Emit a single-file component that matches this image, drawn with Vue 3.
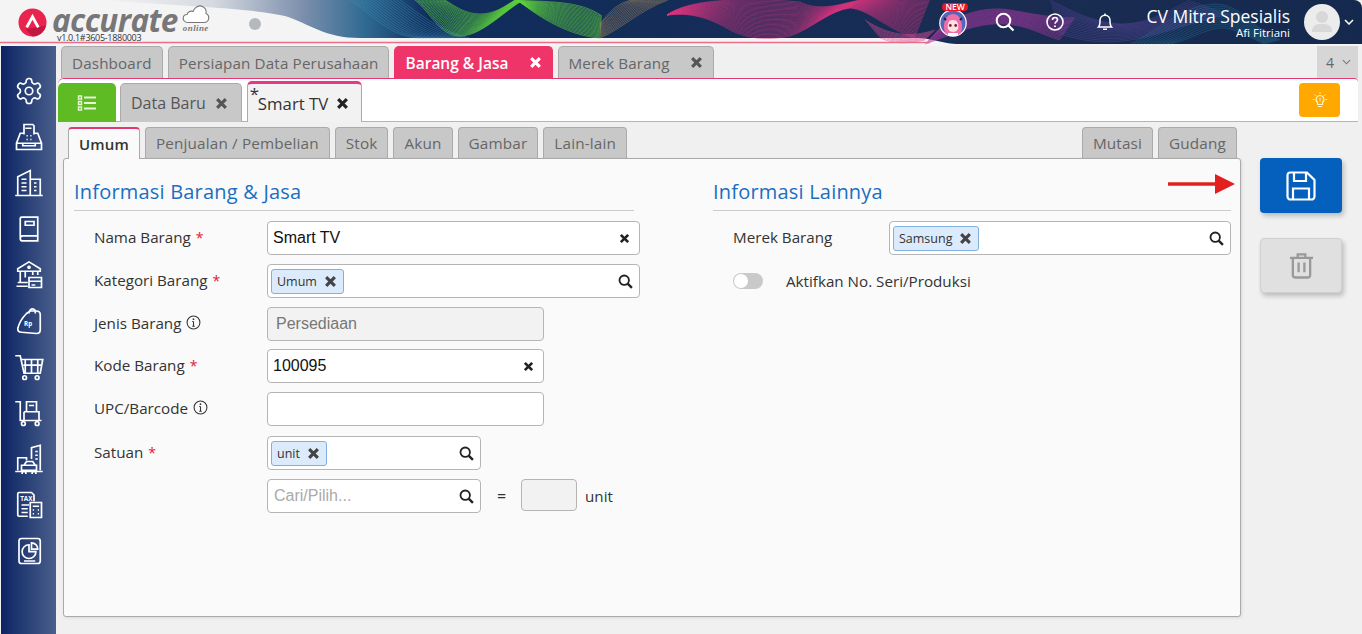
<template>
  <div class="app">
    <svg class="sprite" width="0" height="0">
      <symbol id="i-x" viewBox="0 0 12 12">
        <path d="M2 2l8 8M10 2l-8 8" fill="none" stroke="currentColor" stroke-width="2.9" />
      </symbol>
      <symbol id="i-search" viewBox="0 0 14 14">
        <circle cx="5.8" cy="5.8" r="4.4" fill="none" stroke="currentColor" stroke-width="1.7" />
        <path d="M9 9l4 4" fill="none" stroke="currentColor" stroke-width="2.2" />
      </symbol>
      <symbol id="i-info" viewBox="0 0 14 14">
        <circle cx="7" cy="7" r="6" fill="none" stroke="currentColor" stroke-width="1" />
        <path d="M7 6v4.5M5.8 10.5h2.4M5.8 6H7" fill="none" stroke="currentColor" stroke-width="1" />
        <circle cx="7" cy="3.9" r=".8" fill="currentColor" />
      </symbol>
    </svg>

    <header class="topbar">
      <svg class="banner" viewBox="0 0 1362 46" preserveAspectRatio="none">
        <defs>
          <linearGradient id="base" x1="0" x2="1" y1="0" y2="0">
            <stop offset="0" stop-color="#f4f4f4" />
            <stop offset=".09" stop-color="#d5d9e0" />
            <stop offset=".16" stop-color="#7d90ad" />
            <stop offset=".21" stop-color="#2f6a92" />
            <stop offset=".26" stop-color="#0f2d5c" />
            <stop offset=".7" stop-color="#1a2c52" />
            <stop offset="1" stop-color="#15294f" />
          </linearGradient>
        </defs>
        <path d="M100 0C180 6 250 8 285 16C310 24 325 38 360 38L915 38C935 38 940 44 960 44L1362 44L1362 0Z" fill="url(#base)" />
        <g v-for="ribbon in ribbons" :key="ribbon.name" fill="none" :stroke="ribbon.color" :stroke-opacity="ribbon.opacity" stroke-width=".7">
          <path v-for="(d, i) in ribbon.strands" :key="i" :d="d" />
        </g>
        <path d="M0 42.5H930" stroke="#ee6d86" stroke-width="1.6" />
      </svg>

      <div class="brand">
        <svg class="brand-mark" viewBox="0 0 30 30">
          <circle cx="15" cy="15" r="14.5" fill="#e8244f" />
          <path d="M15 29.5A14.5 14.5 0 0 0 29 18L8 22Z" fill="#c2173f" />
          <path d="M9 20l6-11 6 11" fill="none" stroke="#fff" stroke-width="3" />
        </svg>
        <div class="brand-text">
          <div class="brand-line">
            <span class="brand-name">accurate</span>
            <div class="brand-cloud">
              <svg viewBox="0 0 28 20" width="28" height="20">
                <path d="M6 18.5C2.5 18.5 1 16 1.2 14C1.4 12 3 10.5 5 10.5C6 7.5 9 6.5 11 7.5C12.5 3 17 .8 20.5 2.5C23.5 4 24.5 7 24 9.5C26 10.5 27 12.5 26.7 14.5C26.3 17 24.5 18.5 22 18.5Z" fill="#fff" stroke="#777" stroke-width="1.1" />
              </svg>
              <span class="brand-online">online</span>
            </div>
          </div>
          <span class="brand-version">v1.0.1#3605-1880003</span>
        </div>
        <span class="brand-dot"></span>
      </div>

      <div class="top-actions">
        <div class="mascot">
          <svg viewBox="0 0 28 28" width="28" height="28">
            <circle cx="14" cy="14" r="13.2" fill="#5566b8" stroke="#fff" stroke-width="1.2" />
            <path d="M6 24C3 14 7 5 14 5C21 5 25 14 22 24L19 26H9Z" fill="#f06ea8" />
            <path d="M9 20C8 14 10 11 14 11C18 11 20 14 19 20C17 24 11 24 9 20Z" fill="#fde3dc" />
            <circle cx="11.3" cy="16.5" r="1.4" fill="#7b1f4f" />
            <circle cx="16.7" cy="16.5" r="1.4" fill="#7b1f4f" />
            <path d="M9 24H19V27H9Z" fill="#fff" />
            <path d="M5 9l2 2M23 9l-2 2" stroke="#1b1f4a" stroke-width="2" />
          </svg>
          <span class="mascot-new">NEW</span>
        </div>
        <svg class="top-icon" viewBox="0 0 20 20">
          <circle cx="8.5" cy="8.5" r="6.8" fill="none" stroke="#fff" stroke-width="2" />
          <path d="M13.5 13.5L18.5 18.5" stroke="#fff" stroke-width="2.2" />
        </svg>
        <svg class="top-icon" viewBox="0 0 20 20">
          <circle cx="10" cy="10" r="8" fill="none" stroke="#fff" stroke-width="1.6" />
          <path d="M7.5 8C7.5 6.5 8.7 5.5 10 5.5C11.5 5.5 12.5 6.5 12.5 7.8C12.5 9.5 10 9.8 10 11.8" fill="none" stroke="#fff" stroke-width="1.6" />
          <circle cx="10" cy="14.3" r="1" fill="#fff" />
        </svg>
        <svg class="top-icon bell" viewBox="0 0 20 20">
          <path d="M3.5 15C5 13.5 5 12 5 8.5C5 5.5 7 3.2 10 3.2C13 3.2 15 5.5 15 8.5C15 12 15 13.5 16.5 15Z" fill="none" stroke="#fff" stroke-width="1.5" />
          <path d="M8 17.3H12M10 1.5V3" stroke="#fff" stroke-width="1.6" />
        </svg>
        <div class="company">
          <span class="company-name">CV Mitra Spesialis</span>
          <span class="company-user">Afi Fitriani</span>
        </div>
        <div class="avatar">
          <svg viewBox="0 0 36 36" width="36" height="36">
            <circle cx="18" cy="13" r="6" fill="#d8d8d8" />
            <path d="M8 28C8 21 12 20 18 20C24 20 28 21 28 28Z" fill="#d8d8d8" />
          </svg>
        </div>
        <svg class="avatar-caret" viewBox="0 0 10 6" width="10" height="6">
          <path d="M1 1l4 4 4-4" fill="none" stroke="#fff" stroke-width="1.5" />
        </svg>
      </div>
    </header>

    <div class="layout">
      <nav class="sidebar">
        <svg v-for="icon in sideIcons" :key="icon.name" class="side-icon" viewBox="0 0 24 24">
          <path :d="icon.d" />
          <text v-if="icon.text" :x="icon.tx" :y="icon.ty" class="side-text">{{ icon.text }}</text>
        </svg>
      </nav>

      <main class="main">
        <div class="main-tabs">
          <div
            v-for="tab in mainTabs"
            :key="tab.label"
            class="main-tab"
            :class="{ active: tab.active }"
          >
            <span>{{ tab.label }}</span>
            <svg v-if="tab.close" class="tab-x"><use href="#i-x" /></svg>
          </div>
          <div class="tab-count">
            4
            <svg viewBox="0 0 10 6" width="9" height="6">
              <path d="M1 1l4 4 4-4" fill="none" stroke="#777" stroke-width="1.2" />
            </svg>
          </div>
        </div>

        <div class="doc-bar">
          <button class="list-btn">
            <svg viewBox="0 0 20 18" width="20" height="18">
              <path d="M1.5 2h3v3h-3zM1.5 7.5h3v3h-3zM1.5 13h3v3h-3z" fill="none" stroke="#e6f6d6" stroke-width="1.4" />
              <path d="M7 3.5h12M7 9h12M7 14.5h12" stroke="#e6f6d6" stroke-width="2" />
            </svg>
          </button>
          <div class="doc-tab">
            <span>Data Baru</span>
            <svg class="tab-x"><use href="#i-x" /></svg>
          </div>
          <div class="doc-tab active">
            <sup class="star">*</sup>
            <span>Smart TV</span>
            <svg class="tab-x"><use href="#i-x" /></svg>
          </div>
          <button class="tip-btn">
            <svg viewBox="0 0 18 18" width="18" height="18">
              <path d="M9 4.5A4 4 0 0 0 6.5 11.5V13.5H11.5V11.5A4 4 0 0 0 9 4.5Z" fill="none" stroke="#fff3c8" stroke-width="1.2" />
              <path d="M7 15.5H11M9 7V10.5M9 1V2.8M3.5 3.5L4.8 4.8M14.5 3.5L13.2 4.8M1.8 8.5H3.5M14.5 8.5H16.2" stroke="#fff3c8" stroke-width="1" />
            </svg>
          </button>
        </div>

        <div class="workspace">
          <div class="form-col">
            <div class="form-tabs">
              <div
                v-for="tab in formTabs"
                :key="tab"
                class="form-tab"
                :class="{ active: tab === 'Umum' }"
              >{{ tab }}</div>
              <div class="form-tabs-end">
                <div v-for="tab in extraTabs" :key="tab" class="form-tab">{{ tab }}</div>
              </div>
            </div>

            <section class="panel">
              <svg class="pointer" viewBox="0 0 68 22" width="68" height="22">
                <path d="M0 11H50" stroke="#e3201f" stroke-width="3.5" />
                <path d="M47 1L67 11L47 21Z" fill="#e3201f" />
              </svg>

              <div class="column">
                <h2 class="section-title">Informasi Barang &amp; Jasa</h2>
                <div class="rows">
                  <div class="row">
                    <label>Nama Barang <em>*</em></label>
                    <div class="field wide">
                      <span class="value">Smart TV</span>
                      <svg class="field-x"><use href="#i-x" /></svg>
                    </div>
                  </div>
                  <div class="row">
                    <label>Kategori Barang <em>*</em></label>
                    <div class="field wide chip-field">
                      <span class="chip">Umum <svg class="chip-x"><use href="#i-x" /></svg></span>
                      <svg class="field-search"><use href="#i-search" /></svg>
                    </div>
                  </div>
                  <div class="row tight">
                    <label>Jenis Barang <svg class="info"><use href="#i-info" /></svg></label>
                    <div class="field mid disabled"><span class="value muted">Persediaan</span></div>
                  </div>
                  <div class="row">
                    <label>Kode Barang <em>*</em></label>
                    <div class="field mid">
                      <span class="value">100095</span>
                      <svg class="field-x"><use href="#i-x" /></svg>
                    </div>
                  </div>
                  <div class="row loose">
                    <label>UPC/Barcode <svg class="info"><use href="#i-info" /></svg></label>
                    <div class="field mid"></div>
                  </div>
                  <div class="row">
                    <label>Satuan <em>*</em></label>
                    <div class="field short chip-field">
                      <span class="chip">unit <svg class="chip-x"><use href="#i-x" /></svg></span>
                      <svg class="field-search"><use href="#i-search" /></svg>
                    </div>
                  </div>
                  <div class="row">
                    <label></label>
                    <div class="field short">
                      <span class="value placeholder">Cari/Pilih...</span>
                      <svg class="field-search"><use href="#i-search" /></svg>
                    </div>
                    <span class="equals">=</span>
                    <div class="ratio-box"></div>
                    <span class="ratio-unit">unit</span>
                  </div>
                </div>
              </div>

              <div class="column">
                <h2 class="section-title">Informasi Lainnya</h2>
                <div class="rows">
                  <div class="row">
                    <label class="label-right">Merek Barang</label>
                    <div class="field grow chip-field">
                      <span class="chip">Samsung <svg class="chip-x"><use href="#i-x" /></svg></span>
                      <svg class="field-search"><use href="#i-search" /></svg>
                    </div>
                  </div>
                  <div class="switch-row">
                    <span class="switch"><i></i></span>
                    <span class="switch-label">Aktifkan No. Seri/Produksi</span>
                  </div>
                </div>
              </div>
            </section>
          </div>

          <div class="actions">
            <button class="action save">
              <svg viewBox="0 0 32 32" width="32" height="32">
                <path d="M5 2.5H22L29.5 10V26.5A3 3 0 0 1 26.5 29.5H5.5A3 3 0 0 1 2.5 26.5V5A2.5 2.5 0 0 1 5 2.5Z" fill="none" stroke="#fff" stroke-width="2.2" />
                <path d="M9 3V11H21V3M8 29V18.5H24V29" fill="none" stroke="#fff" stroke-width="2.2" />
              </svg>
            </button>
            <button class="action remove">
              <svg viewBox="0 0 26 28" width="25" height="27">
                <path d="M1 6H25M9 5.5V2.5H17V5.5M4 6V24A2.5 2.5 0 0 0 6.5 26.5H19.5A2.5 2.5 0 0 0 22 24V6M10 11V21M16 11V21" fill="none" stroke="#999" stroke-width="2.4" />
              </svg>
            </button>
          </div>
        </div>
      </main>
    </div>
  </div>
</template>

<script setup>
const mainTabs = [
  { label: 'Dashboard' },
  { label: 'Persiapan Data Perusahaan' },
  { label: 'Barang & Jasa', close: true, active: true },
  { label: 'Merek Barang', close: true },
]

const formTabs = ['Umum', 'Penjualan / Pembelian', 'Stok', 'Akun', 'Gambar', 'Lain-lain']
const extraTabs = ['Mutasi', 'Gudang']

// banner waves: each ribbon is a bundle of thin lines between two edge curves
const strands = (a, b, count) => {
  const lines = []
  for (let s = 0; s <= count; s++) {
    const t = s / count
    const p = a.map((v, i) => (v + (b[i] - v) * t).toFixed(1))
    let d = `M${p[0]} ${p[1]}`
    for (let i = 2; i < p.length; i += 6) {
      d += `C${p.slice(i, i + 6).join(' ')}`
    }
    lines.push(d)
  }
  return lines
}

const ribbons = [
  {
    name: 'teal',
    color: '#3f9fc0',
    opacity: 0.55,
    strands: strands(
      [350, 0, 370, 12, 390, 38, 420, 38],
      [400, 0, 420, 14, 440, 32, 470, 38],
      14,
    ),
  },
  {
    name: 'green',
    color: '#5fd63c',
    opacity: 0.8,
    strands: strands(
      [415, 0, 430, 12, 440, 36, 460, 36, 480, 36, 500, 15, 520, 2, 540, 18, 570, 36, 600, 38],
      [445, 0, 455, 6, 465, 14, 480, 14, 495, 14, 505, 6, 515, 0, 545, 2, 580, 0, 602, 16],
      22,
    ),
  },
  {
    name: 'gold',
    color: '#c29a5a',
    opacity: 0.6,
    strands: strands(
      [600, 38, 620, 30, 640, 10, 668, 0],
      [600, 24, 610, 10, 620, 2, 632, 0],
      14,
    ),
  },
  {
    name: 'pink',
    color: '#d8327f',
    opacity: 0.7,
    strands: strands(
      [667, 15, 690, 12, 710, 18, 730, 30, 750, 40, 770, 40, 790, 36, 810, 30, 830, 10, 850, 8, 870, 10, 885, 28, 915, 38],
      [667, 15, 685, 2, 720, 0, 740, 0, 760, 0, 780, 0, 800, 2, 820, 12, 840, 4, 860, 0, 880, 0, 900, 0, 930, 0],
      30,
    ),
  },
  {
    name: 'pink-low',
    color: '#e04a94',
    opacity: 0.7,
    strands: strands(
      [880, 38, 895, 44, 905, 44, 925, 40],
      [865, 20, 890, 36, 910, 38, 935, 30],
      8,
    ),
  },
  {
    name: 'purple',
    color: '#b33aa8',
    opacity: 0.7,
    strands: strands(
      [925, 44, 950, 36, 975, 22, 1005, 24, 1030, 26, 1040, 34, 1060, 40],
      [940, 28, 960, 14, 985, 6, 1010, 10, 1035, 14, 1050, 18, 1075, 18],
      18,
    ),
  },
  {
    name: 'indigo',
    color: '#6a4fb0',
    opacity: 0.5,
    strands: strands(
      [1050, 0, 1070, 10, 1090, 22, 1120, 24, 1150, 24, 1170, 10, 1190, 0],
      [1060, 34, 1090, 44, 1120, 44, 1150, 36, 1180, 28, 1200, 20, 1230, 14],
      16,
    ),
  },
  {
    name: 'sea',
    color: '#2a8fae',
    opacity: 0.45,
    strands: strands(
      [1130, 44, 1160, 30, 1180, 6, 1215, 4, 1240, 4, 1250, 26, 1280, 40],
      [1170, 44, 1190, 40, 1210, 26, 1225, 28, 1240, 30, 1250, 38, 1265, 44],
      12,
    ),
  },
]

const sideIcons = [
  { name: 'settings', d: 'M12.22 2h-.44a2 2 0 0 0-2 2v.18a2 2 0 0 1-1 1.73l-.43.25a2 2 0 0 1-2 0l-.15-.08a2 2 0 0 0-2.73.73l-.22.38a2 2 0 0 0 .73 2.73l.15.1a2 2 0 0 1 1 1.72v.51a2 2 0 0 1-1 1.74l-.15.09a2 2 0 0 0-.73 2.73l.22.38a2 2 0 0 0 2.73.73l.15-.08a2 2 0 0 1 2 0l.43.25a2 2 0 0 1 1 1.73V20a2 2 0 0 0 2 2h.44a2 2 0 0 0 2-2v-.18a2 2 0 0 1 1-1.73l.43-.25a2 2 0 0 1 2 0l.15.08a2 2 0 0 0 2.73-.73l.22-.39a2 2 0 0 0-.73-2.73l-.15-.08a2 2 0 0 1-1-1.74v-.5a2 2 0 0 1 1-1.74l.15-.09a2 2 0 0 0 .73-2.73l-.22-.38a2 2 0 0 0-2.73-.73l-.15.08a2 2 0 0 1-2 0l-.43-.25a2 2 0 0 1-1-1.73V4a2 2 0 0 0-2-2zM15 12a3 3 0 1 1-6 0a3 3 0 0 1 6 0z' },
  { name: 'fax', d: 'M8 10V2h7l1 1v7M9 5h5M8 9H5l-3 8v5h20v-5l-3-8h-3M2 17h20M7 17v2h10v-2M10 11h1M13 11h1M10 14h1M13 14h1' },
  { name: 'company', d: 'M3 22V7l10-5v20M13 9h8v13M1 22h22M6 9h4M6 12h4M6 15h4M6 18h4M16 12h2M16 15h2M16 18h2' },
  { name: 'book', d: 'M5 19V3.5a1 1 0 0 1 1-1h13v19H7a2 2 0 0 1-2-2a2 2 0 0 1 2-2h12M9 6h7v3H9z' },
  { name: 'bank', d: 'M12 1.5L3 7v2h18V7zM5 9v9M9 9v5M3 18h8M2 21h9M12 5a.8.8 0 1 0 .01 0M12 14h10v8H12zM12 17h10M14 20h3M15 9v3M19 9v3' },
  { name: 'price', d: 'M10 6c-3 3-6 8-7 12c0 2 1 3 3 3l12 1c2 0 3-1 3-3V7c0-2-1-3-3-3h-5zM12 6c0-5 6-5 5 0', text: 'Rp', tx: 8, ty: 16 },
  { name: 'cart', d: 'M1 3h4l3 14h13l2-11H6M7.5 10.5h15M9 6v11M14 6v11M19 6v11M7 20.5a1.5 1.5 0 1 0 3 0a1.5 1.5 0 1 0-3 0M17 20.5a1.5 1.5 0 1 0 3 0a1.5 1.5 0 1 0-3 0' },
  { name: 'cart-box', d: 'M1 3h4v15h17M8 11h12v7M10 3h8v8h-8zM12 6h4M8 11v7M6 20.5a1.5 1.5 0 1 0 3 0a1.5 1.5 0 1 0-3 0M17 20.5a1.5 1.5 0 1 0 3 0a1.5 1.5 0 1 0-3 0' },
  { name: 'fleet', d: 'M1 22h22M3 21V11h7v2M14 12V3l7-2v20M17 6h2M17 9h2M17 12h2M8 17l2-3h5l2 3M6 17h12v4H6zM8 22a1.5 1.5 0 1 0 .01 0M16 22a1.5 1.5 0 1 0 .01 0' },
  { name: 'tax', d: 'M4 2h10l2 2v5M4 2a1 1 0 0 0-1 1v17a1 1 0 0 0 1 1h7M6 12h6M6 15h5M6 18h5M13 10h9v12h-9zM15 13h5M15 16h1M19 16h1M15 19h1M19 19h1', text: 'TAX', tx: 5, ty: 8.5 },
  { name: 'report', d: 'M6 2h13a2 2 0 0 1 2 2v16a2 2 0 0 1-2 2H6a2 2 0 0 1-2-2V4a2 2 0 0 1 2-2zM12 7a5.5 5.5 0 1 0 5.5 5.5H12zM14 5.5a5 5 0 0 1 5 5h-5zM8 20h9' },
]
</script>

<style>
html, body { margin: 0; background: #f0f0f0; }
</style>

<style scoped>
.app {
  width: 1362px;
  height: 634px;
  overflow: hidden;
  display: flex;
  flex-direction: column;
  background: #f0f0f0;
  font-family: "Open Sans", "Noto Sans", sans-serif;
  color: #333;
}

.sprite { position: absolute; }

/* top bar */
.topbar {
  position: relative;
  height: 46px;
  flex: none;
  display: flex;
  justify-content: space-between;
  background: #f4f4f4;
  border-top-right-radius: 8px;
  overflow: hidden;
}
.banner {
  position: absolute;
  inset: 0;
  width: 100%;
  height: 100%;
}
.brand {
  position: relative;
  display: flex;
  align-items: flex-start;
  padding: 7px 0 0 18px;
}
.brand-mark { width: 29px; height: 29px; margin-top: 1px; }
.brand-text { display: flex; flex-direction: column; margin-left: 5px; }
.brand-line { display: flex; height: 26px; }
.brand-name {
  font-style: italic;
  font-weight: 700;
  font-size: 31.5px;
  line-height: 26px;
  letter-spacing: -.6px;
  color: #77777a;
  margin-right: 4px;
}
.brand-cloud {
  display: flex;
  flex-direction: column;
  margin-top: -3px;
  align-items: center;
}
.brand-online {
  font-family: "Liberation Serif", serif;
  font-size: 9px;
  font-weight: bold;
  font-style: italic;
  letter-spacing: .4px;
  line-height: 9px;
  color: #777;
}
.brand-version {
  font-size: 9px;
  line-height: 9px;
  margin-left: 5px;
  color: #333;
  letter-spacing: -.3px;
}
.brand-dot {
  width: 12px;
  height: 12px;
  border-radius: 50%;
  background: #b5b8bd;
  margin: 11px 0 0 39px;
}

.top-actions {
  position: relative;
  display: flex;
  align-items: center;
  padding: 0 8px 2px 0;
}
.mascot { position: relative; width: 28px; height: 28px; margin: 2px 28px 0 0; }
.mascot-new {
  position: absolute;
  top: -6px;
  left: 3px;
  padding: 0 3px;
  background: #e8152a;
  border-radius: 4px;
  color: #fff;
  font-size: 8.5px;
  line-height: 8px;
  font-weight: 600;
}
.top-icon { width: 20px; height: 20px; margin-right: 30px; }
.top-icon.bell { margin-right: 31px; }
.company { display: flex; flex-direction: column; align-items: flex-end; color: #fff; margin-right: 14px; }
.company-name { font-size: 17.5px; line-height: 20px; }
.company-user { font-size: 11.5px; line-height: 13px; }
.avatar {
  width: 36px;
  height: 36px;
  border-radius: 50%;
  background: #ececec;
}
.avatar-caret { margin-left: 4px; }

/* page layout */
.layout { flex: 1; display: flex; min-height: 0; }
.sidebar {
  width: 55px;
  margin-left: 1px;
  padding-top: 22px;
  box-sizing: border-box;
  display: flex;
  flex-direction: column;
  align-items: center;
  background: linear-gradient(90deg, #0b2463, #4a5f8c);
}
.side-icon {
  width: 30px;
  height: 30px;
  padding: 8px 0;
  flex: none;
  fill: none;
  stroke: #fff;
  stroke-width: 1.35;
}
.side-text {
  font-size: 5px;
  font-weight: 700;
  fill: #fff;
  stroke: none;
}

.main { flex: 1; min-width: 0; display: flex; flex-direction: column; padding-right: 4px; }

.main-tabs {
  height: 32px;
  display: flex;
  align-items: flex-end;
  padding-left: 5px;
  gap: 5px;
}
.main-tab {
  height: 32px;
  box-sizing: border-box;
  padding: 0 10px;
  display: flex;
  align-items: center;
  gap: 20px;
  background: #c8c8c8;
  border: 1px solid #aaa;
  border-bottom: none;
  border-radius: 5px 5px 0 0;
  font-size: 15.2px;
  letter-spacing: .15px;
  color: #666;
}
.main-tab.active {
  background: #ee3468;
  border-color: #ee3468;
  color: #fff;
  font-weight: 600;
  font-size: 15.5px;
  letter-spacing: 0;
}
.main-tab:last-of-type { margin-left: 1px; }
.tab-x { width: 13px; height: 13px; color: #555; }
.main-tab.active .tab-x { color: #fff; }
.tab-count {
  margin-left: auto;
  width: 41px;
  height: 32px;
  box-sizing: border-box;
  display: flex;
  align-items: center;
  justify-content: center;
  gap: 8px;
  padding-left: 2px;
  background: #d6d6d6;
  color: #666;
  font-size: 14px;
}

.doc-bar {
  height: 44px;
  box-sizing: border-box;
  flex: none;
  display: flex;
  align-items: flex-end;
  background: #fff;
  border-top: 1px solid #e0386f;
  border-bottom: 1px solid #b5b5b5;
  border-radius: 6px 4px 0 0;
  margin-left: 2px;
}
.list-btn {
  width: 58px;
  height: 39px;
  padding: 0;
  border: none;
  border-radius: 5px 5px 0 0;
  background: #5fbb24;
  display: flex;
  align-items: center;
  justify-content: center;
  margin-bottom: -1px;
}
.doc-tab {
  height: 39px;
  box-sizing: border-box;
  margin: 0 0 -1px 4px;
  padding: 0 13px 0 10px;
  display: flex;
  align-items: center;
  gap: 9px;
  background: #c8c8c8;
  border: 1px solid #aaa;
  border-bottom: none;
  border-radius: 5px 5px 0 0;
  font-size: 16px;
  color: #555;
}
.doc-tab.active {
  position: relative;
  height: 41px;
  margin-left: 5px;
  padding: 1px 12px 0 10px;
  gap: 8px;
  background: #f2f2f2;
  border-top: 3px solid #e53888;
  color: #333;
  font-size: 16.8px;
}
.doc-tab.active .tab-x { color: #222; }
.star {
  position: absolute;
  left: 2px;
  top: 2px;
  font-size: 17px;
  line-height: 15px;
}
.tip-btn {
  margin: 4px 18px 4px auto;
  align-self: flex-start;
  width: 41px;
  height: 34px;
  padding: 0;
  border: none;
  border-radius: 4px;
  background: #ffa800;
  display: flex;
  align-items: center;
  justify-content: center;
}

.workspace { flex: 1; display: flex; min-height: 0; padding-left: 7px; }
.form-col { width: 1178px; flex: none; }
.form-tabs {
  height: 31px;
  margin-top: 5px;
  padding: 0 4px 0 5px;
  display: flex;
  gap: 5px;
}
.form-tabs-end { display: flex; gap: 5px; margin-left: auto; }
.form-tab {
  height: 31px;
  box-sizing: border-box;
  padding: 0 10px;
  display: flex;
  align-items: center;
  background: #c8c8c8;
  border: 1px solid #aaa;
  border-bottom: none;
  border-radius: 4px 4px 0 0;
  font-size: 15.3px;
  letter-spacing: .15px;
  color: #666;
}
.form-tab.active {
  position: relative;
  z-index: 1;
  background: #fafafa;
  border-top: 2px solid #e0386f;
  color: #333;
  font-weight: 600;
  font-size: 15px;
  height: 32px;
}

.panel {
  position: relative;
  height: 459px;
  box-sizing: border-box;
  padding: 20px 9px 0 10px;
  display: grid;
  grid-template-columns: 560px 518px;
  column-gap: 79px;
  background: #fafafa;
  border: 1px solid #aaa;
  border-radius: 3px;
  box-shadow: 1px 1px 3px rgba(0, 0, 0, .1);
}
.pointer { position: absolute; right: 4px; top: 14px; }
.section-title {
  margin: 0;
  height: 32px;
  line-height: 25px;
  box-sizing: border-box;
  border-bottom: 1px solid #ccc;
  color: #1b6ec2;
  font-size: 20px;
  font-weight: 400;
  letter-spacing: .2px;
}
.rows { display: flex; flex-direction: column; gap: 9px; padding: 10px 0 0 20px; }
.row { display: flex; align-items: center; height: 34px; }
.row.tight { margin-bottom: -1px; }
.row.loose { margin-bottom: 1px; }
.row label {
  width: 173px;
  flex: none;
  padding-bottom: 2px;
  font-size: 15.2px;
  color: #333;
  display: flex;
  align-items: center;
  gap: 5px;
}
.row label.label-right { width: 156px; }
.row em { color: #e3202f; font-style: normal; font-size: 14px; }
.info { width: 15px; height: 15px; color: #333; margin-top: -2px; }

.field {
  position: relative;
  height: 34px;
  flex: none;
  box-sizing: border-box;
  display: flex;
  align-items: center;
  justify-content: space-between;
  padding: 0 8px 0 5px;
  background: #fff;
  border: 1px solid #b5b5b5;
  border-radius: 4px;
  font-family: "Liberation Sans", Arial, sans-serif;
  font-size: 16px;
  color: #111;
}
.field.wide { width: 373px; }
.field.mid { width: 277px; }
.field.short { width: 214px; }
.field.grow { width: 342px; }
.field.disabled { background: #f2f2f2; padding-left: 8px; }
.chip-field { padding-left: 3px; }
.value.muted { color: #777; }
.value.placeholder { color: #aaa; padding-left: 1px; }
.field-x { width: 11px; height: 11px; color: #222; margin-right: 1px; }
.field-search { width: 15px; height: 15px; color: #222; margin-right: -2px; }
.chip {
  height: 25px;
  box-sizing: border-box;
  display: flex;
  align-items: center;
  gap: 7px;
  padding: 0 6px 0 5px;
  background: #dcebfb;
  border: 1px solid #7fb0e0;
  border-radius: 3px;
  font-family: "Open Sans", sans-serif;
  font-size: 12.5px;
  color: #333;
}
.chip-x { width: 13px; height: 13px; color: #444; }

.equals { margin-left: 16px; width: 24px; font-size: 16px; }
.ratio-box {
  align-self: flex-start;
  width: 56px;
  height: 32px;
  box-sizing: border-box;
  background: #f2f2f2;
  border: 1px solid #b5b5b5;
  border-radius: 4px;
}
.ratio-unit { margin-left: 8px; font-size: 15.2px; }

.switch-row { display: flex; align-items: center; height: 34px; }
.switch {
  position: relative;
  width: 30px;
  height: 16px;
  border-radius: 8px;
  background: #c9c9c9;
}
.switch i {
  position: absolute;
  left: 1px;
  top: 1px;
  width: 14px;
  height: 14px;
  border-radius: 50%;
  background: #fff;
}
.switch-label { margin-left: 23px; font-size: 15.2px; }

.actions { margin: 36px 0 0 19px; display: flex; flex-direction: column; gap: 25px; }
.action {
  width: 82px;
  height: 55px;
  padding: 0;
  border-radius: 4px;
  display: flex;
  align-items: center;
  justify-content: center;
  box-shadow: 2px 3px 5px rgba(0, 0, 0, .22);
}
.action.save { background: #0560bd; border: none; }
.action.remove { background: #e0e0e0; border: 1px solid #d0d0d0; }
</style>
